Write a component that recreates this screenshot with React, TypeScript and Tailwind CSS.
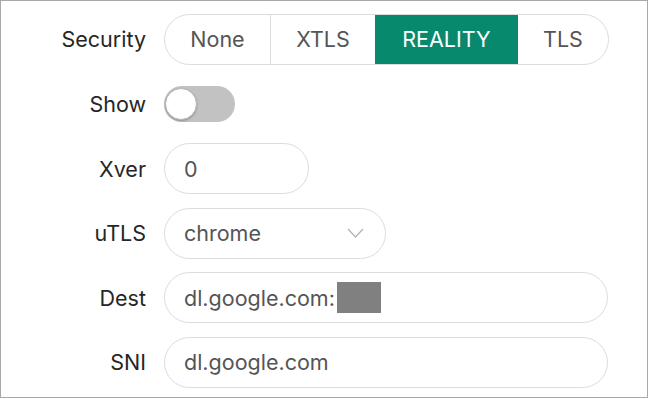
import { useState } from "react";

const options = ["None", "XTLS", "REALITY", "TLS"];

function Row({ label, children }: { label: string; children: React.ReactNode }) {
  return (
    <div className="flex items-center h-[51px]">
      <div className="w-[145px] text-right text-[21.5px] text-[#262626]">{label}</div>
      <div className="ml-[18px] flex items-center">{children}</div>
    </div>
  );
}

export default function App() {
  const [security, setSecurity] = useState("REALITY");
  const [show, setShow] = useState(false);

  return (
    <div
      className="w-[648px] h-[398px] bg-white border border-[#a8a8a8] pt-[13px]"
      style={{ fontFamily: "Inter, 'Noto Sans', sans-serif" }}
    >
      <div className="flex flex-col gap-[13.6px]">
        <Row label="Security">
          <div className="flex h-[51px] border-[1.5px] border-[#dcdcdc] rounded-full overflow-hidden">
            {options.map((opt, i) => (
              <button
                key={opt}
                onClick={() => setSecurity(opt)}
                className={`text-[21.5px] ${
                  opt === "None"
                    ? "w-[105px]"
                    : opt === "XTLS"
                    ? "w-[105px]"
                    : opt === "REALITY"
                    ? "w-[143px]"
                    : "w-[90px]"
                } ${i > 0 && options[i - 1] !== security && opt !== security ? "border-l-[1.5px] border-[#dcdcdc]" : ""} ${
                  security === opt ? "bg-[#07896d] text-white" : "text-[#555555]"
                }`}
              >
                {opt}
              </button>
            ))}
          </div>
        </Row>

        <Row label="Show">
          <button
            onClick={() => setShow(!show)}
            className={`relative w-[71px] h-[36px] rounded-full ${show ? "bg-[#07896d]" : "bg-[#c2c2c2]"}`}
          >
            <span
              className={`absolute top-[2px] w-[32px] h-[32px] rounded-full bg-white border border-[#b5b5b5] shadow-[0_1px_2px_rgba(0,0,0,0.25)] ${
                show ? "left-[37px]" : "left-[1px]"
              }`}
            />
          </button>
        </Row>

        <Row label="Xver">
          <div className="w-[145px] h-[51px] border-[1.5px] border-[#dcdcdc] rounded-full flex items-center pl-[19px] text-[21.5px] text-[#555555]">
            0
          </div>
        </Row>

        <Row label="uTLS">
          <div className="w-[222px] h-[51px] border-[1.5px] border-[#dcdcdc] rounded-full flex items-center justify-between pl-[19px] pr-[21px] text-[21.5px] text-[#555555]">
            <span>chrome</span>
            <svg width="17" height="10" viewBox="0 0 17 10" fill="none">
              <path d="M1 1l7.5 8L16 1" stroke="#b3b3b3" strokeWidth="1.3" />
            </svg>
          </div>
        </Row>

        <Row label="Dest">
          <div className="w-[444px] h-[51px] border-[1.5px] border-[#dcdcdc] rounded-full flex items-center pl-[19px] text-[21.5px] text-[#555555]">
            <span>dl.google.com:</span>
            <span className="ml-[2px] w-[44px] h-[31px] bg-[#808080]" />
          </div>
        </Row>

        <Row label="SNI">
          <div className="w-[444px] h-[51px] border-[1.5px] border-[#dcdcdc] rounded-full flex items-center pl-[19px] text-[21.5px] text-[#555555]">
            dl.google.com
          </div>
        </Row>
      </div>
    </div>
  );
}
